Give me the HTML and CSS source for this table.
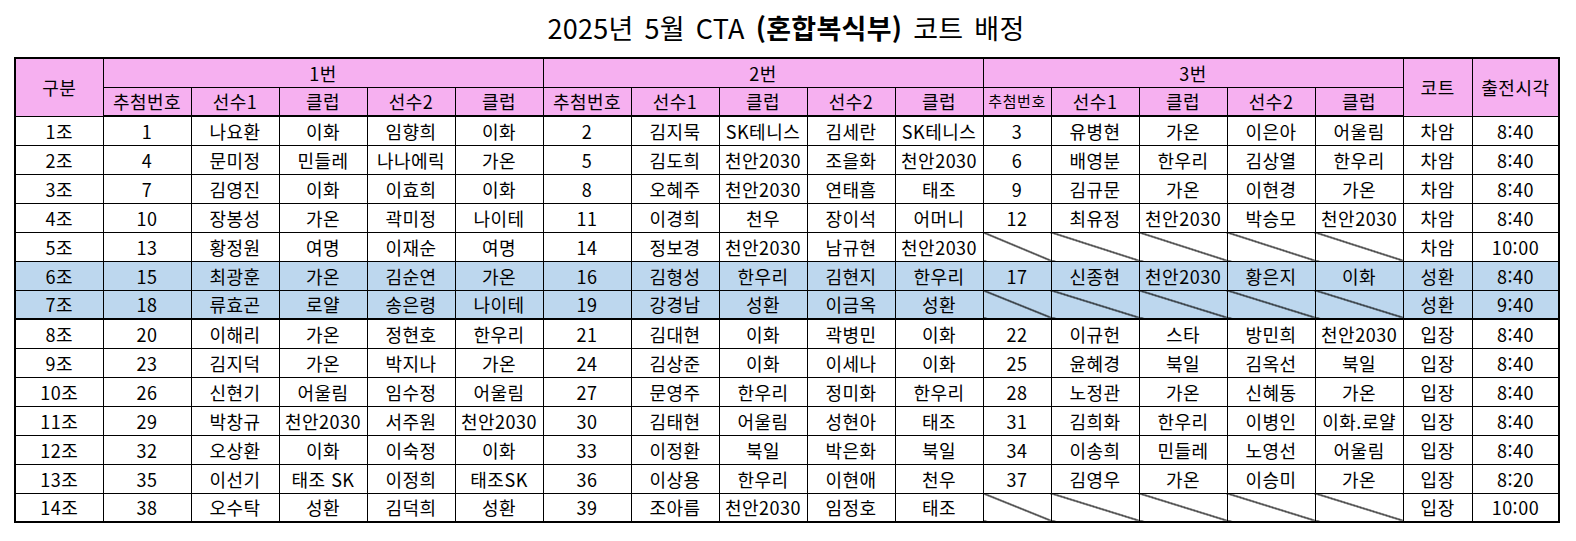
FILE: index.html
```html
<!DOCTYPE html>
<html lang="ko">
<head>
<meta charset="utf-8">
<title>2025년 5월 CTA (혼합복식부) 코트 배정</title>
<link rel="stylesheet" href="styles.css">
</head>
<body>
<div class="page">
  <h1 class="title">2025년 5월 CTA <b>(혼합복식부)</b> 코트 배정</h1>
  <table class="sheet">
    <colgroup>
      <col class="c88"><col class="c88"><col class="c88"><col class="c88"><col class="c88"><col class="c88">
      <col class="c88"><col class="c88"><col class="c88"><col class="c88"><col class="c88">
      <col class="c68"><col class="c88"><col class="c88"><col class="c88"><col class="c88">
      <col class="c69"><col class="c87">
    </colgroup>
    <thead>
      <tr class="h1row">
        <th rowspan="2">구분</th>
        <th colspan="5">1번</th>
        <th colspan="5">2번</th>
        <th colspan="5">3번</th>
        <th rowspan="2">코트</th>
        <th rowspan="2">출전시각</th>
      </tr>
      <tr class="h2row">
        <th>추첨번호</th><th>선수1</th><th>클럽</th><th>선수2</th><th>클럽</th>
        <th>추첨번호</th><th>선수1</th><th>클럽</th><th>선수2</th><th>클럽</th>
        <th class="small">추첨번호</th><th>선수1</th><th>클럽</th><th>선수2</th><th>클럽</th>
      </tr>
    </thead>
    <tbody>
      <tr><td>1조</td><td>1</td><td>나요환</td><td>이화</td><td>임향희</td><td>이화</td><td>2</td><td>김지묵</td><td>SK테니스</td><td>김세란</td><td>SK테니스</td><td>3</td><td>유병현</td><td>가온</td><td>이은아</td><td>어울림</td><td>차암</td><td>8:40</td></tr>
      <tr><td>2조</td><td>4</td><td>문미정</td><td>민들레</td><td>나나에릭</td><td>가온</td><td>5</td><td>김도희</td><td>천안2030</td><td>조을화</td><td>천안2030</td><td>6</td><td>배영분</td><td>한우리</td><td>김상열</td><td>한우리</td><td>차암</td><td>8:40</td></tr>
      <tr><td>3조</td><td>7</td><td>김영진</td><td>이화</td><td>이효희</td><td>이화</td><td>8</td><td>오혜주</td><td>천안2030</td><td>연태흠</td><td>태조</td><td>9</td><td>김규문</td><td>가온</td><td>이현경</td><td>가온</td><td>차암</td><td>8:40</td></tr>
      <tr><td>4조</td><td>10</td><td>장봉성</td><td>가온</td><td>곽미정</td><td>나이테</td><td>11</td><td>이경희</td><td>천우</td><td>장이석</td><td>어머니</td><td>12</td><td>최유정</td><td>천안2030</td><td>박승모</td><td>천안2030</td><td>차암</td><td>8:40</td></tr>
      <tr><td>5조</td><td>13</td><td>황정원</td><td>여명</td><td>이재순</td><td>여명</td><td>14</td><td>정보경</td><td>천안2030</td><td>남규현</td><td>천안2030</td><td class="x"></td><td class="x"></td><td class="x"></td><td class="x"></td><td class="x"></td><td>차암</td><td>10:00</td></tr>
      <tr class="blue"><td>6조</td><td>15</td><td>최광훈</td><td>가온</td><td>김순연</td><td>가온</td><td>16</td><td>김형성</td><td>한우리</td><td>김현지</td><td>한우리</td><td>17</td><td>신종현</td><td>천안2030</td><td>황은지</td><td>이화</td><td>성환</td><td>8:40</td></tr>
      <tr class="blue sep"><td>7조</td><td>18</td><td>류효곤</td><td>로얄</td><td>송은령</td><td>나이테</td><td>19</td><td>강경남</td><td>성환</td><td>이금옥</td><td>성환</td><td class="x"></td><td class="x"></td><td class="x"></td><td class="x"></td><td class="x"></td><td>성환</td><td>9:40</td></tr>
      <tr><td>8조</td><td>20</td><td>이해리</td><td>가온</td><td>정현호</td><td>한우리</td><td>21</td><td>김대현</td><td>이화</td><td>곽병민</td><td>이화</td><td>22</td><td>이규헌</td><td>스타</td><td>방민희</td><td>천안2030</td><td>입장</td><td>8:40</td></tr>
      <tr><td>9조</td><td>23</td><td>김지덕</td><td>가온</td><td>박지나</td><td>가온</td><td>24</td><td>김상준</td><td>이화</td><td>이세나</td><td>이화</td><td>25</td><td>윤혜경</td><td>북일</td><td>김옥선</td><td>북일</td><td>입장</td><td>8:40</td></tr>
      <tr><td>10조</td><td>26</td><td>신현기</td><td>어울림</td><td>임수정</td><td>어울림</td><td>27</td><td>문영주</td><td>한우리</td><td>정미화</td><td>한우리</td><td>28</td><td>노정관</td><td>가온</td><td>신혜동</td><td>가온</td><td>입장</td><td>8:40</td></tr>
      <tr><td>11조</td><td>29</td><td>박창규</td><td>천안2030</td><td>서주원</td><td>천안2030</td><td>30</td><td>김태현</td><td>어울림</td><td>성현아</td><td>태조</td><td>31</td><td>김희화</td><td>한우리</td><td>이병인</td><td>이화.로얄</td><td>입장</td><td>8:40</td></tr>
      <tr><td>12조</td><td>32</td><td>오상환</td><td>이화</td><td>이숙정</td><td>이화</td><td>33</td><td>이정환</td><td>북일</td><td>박은화</td><td>북일</td><td>34</td><td>이송희</td><td>민들레</td><td>노영선</td><td>어울림</td><td>입장</td><td>8:40</td></tr>
      <tr><td>13조</td><td>35</td><td>이선기</td><td>태조 SK</td><td>이정희</td><td>태조SK</td><td>36</td><td>이상용</td><td>한우리</td><td>이현애</td><td>천우</td><td>37</td><td>김영우</td><td>가온</td><td>이승미</td><td>가온</td><td>입장</td><td>8:20</td></tr>
      <tr><td>14조</td><td>38</td><td>오수탁</td><td>성환</td><td>김덕희</td><td>성환</td><td>39</td><td>조아름</td><td>천안2030</td><td>임정호</td><td>태조</td><td class="x"></td><td class="x"></td><td class="x"></td><td class="x"></td><td class="x"></td><td>입장</td><td>10:00</td></tr>
    </tbody>
  </table>
</div>
</body>
</html>
```
FILE: styles.css
```css
html, body {
  margin: 0;
  padding: 0;
  background: #ffffff;
}

body {
  font-family: "Noto Sans CJK KR", "Noto Sans", sans-serif;
  color: #000000;
}

.page {
  padding-left: 14px;
  width: 1544px;
}

.title {
  margin: 0;
  height: 57px;
  line-height: 56px;
  text-align: center;
  font-size: 27px;
  font-weight: normal;
  word-spacing: 3px;
  letter-spacing: 0.3px;
}

.title b {
  font-weight: bold;
}

.sheet {
  border-collapse: collapse;
  table-layout: fixed;
  width: 1544px;
  border: 2px solid #000000;
  font-size: 18px;
  letter-spacing: 0.5px;
}

.c88 { width: 88px; }
.c68 { width: 68px; }
.c69 { width: 69px; }
.c87 { width: 87px; }

.sheet th,
.sheet td {
  border: 1px solid #000000;
  padding: 0;
  text-align: center;
  vertical-align: middle;
  white-space: nowrap;
  overflow: hidden;
  line-height: 20px;
  font-weight: normal;
}

.sheet tr {
  height: 29px;
}

.sheet thead th {
  background: #f6b0f0;
}

.sheet .h2row th {
  border-bottom: 2px solid #000000;
}

.sheet th.small {
  font-size: 15px;
  letter-spacing: 0.6px;
}

.sheet .blue td {
  background-color: #bdd7ee;
}

.sheet .sep td {
  border-bottom: 2px solid #000000;
}

.sheet td.x {
  background-image: linear-gradient(to top right,
    transparent calc(50% - 0.9px),
    #000000 calc(50% - 0.35px),
    #000000 calc(50% + 0.35px),
    transparent calc(50% + 0.9px));
}
```
